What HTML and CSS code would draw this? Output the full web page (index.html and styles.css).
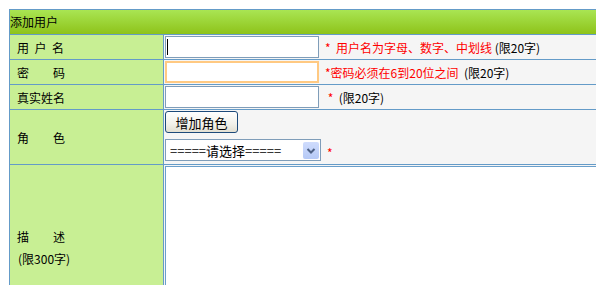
FILE: index.html
```html
<!DOCTYPE html>
<html lang="zh-CN">
<head>
<meta charset="utf-8">
<title>添加用户</title>
<link rel="stylesheet" href="styles.css">
</head>
<body>
<form class="form">
  <div class="head">添加用户</div>

  <div class="label"><span class="spaced">用户名</span></div>
  <div class="field">
    <span class="input-wrap"><input class="text" type="text"><span class="caret"></span></span>
    <span class="hint"><span class="req">*&nbsp; 用户名为字母、数字、中划线</span> (限20字)</span>
  </div>

  <div class="label">密　　码</div>
  <div class="field">
    <input class="text active" type="password">
    <span class="hint"><span class="req">*密码必须在6到20位之间</span>&nbsp;&nbsp;(限20字)</span>
  </div>

  <div class="label">真实姓名</div>
  <div class="field">
    <input class="text" type="text">
    <span class="hint"><span class="req">&nbsp;*</span>&nbsp;&nbsp;(限20字)</span>
  </div>

  <div class="label tall">角　　色</div>
  <div class="field stack">
    <button class="btn" type="button">增加角色</button>
    <div class="select-row">
      <span class="select-wrap">
        <select class="select"><option>=====请选择=====</option></select>
        <span class="arrow"><svg width="16" height="17" viewBox="0 0 16 17"><polyline points="4.5,7 8,10.5 11.5,7" fill="none" stroke="#4d6185" stroke-width="2"/></svg></span>
      </span>
      <span class="req star">*</span>
    </div>
  </div>

  <div class="label desc">
    <div>描　　述</div>
    <div class="limit">(限300字)</div>
  </div>
  <div class="field area">
    <textarea class="textarea"></textarea>
  </div>
</form>
</body>
</html>
```
FILE: styles.css
```css
html {
  overflow: hidden;
}

body {
  margin: 0;
  padding: 9px;
  background: #fff;
  color: #000;
  font: 12px "Noto Sans CJK SC", "Liberation Sans", sans-serif;
}

.form {
  display: grid;
  grid-template-columns: 154px 600px;
  width: max-content;
  border-top: 1px solid #649bc8;
  border-left: 1px solid #649bc8;
}

.head {
  grid-column: 1 / -1;
  box-sizing: border-box;
  height: 25px;
  line-height: 24px;
  border-bottom: 1px solid #649bc8;
  background: linear-gradient(#a9e553, #8ec31a);
}

.label {
  box-sizing: border-box;
  height: 25px;
  padding-left: 7px;
  display: flex;
  align-items: center;
  background: #c8ef94;
  border-right: 1px solid #649bc8;
  border-bottom: 1px solid #649bc8;
}

.label.tall {
  height: 55px;
}

.spaced {
  letter-spacing: 5.5px;
}

.field {
  box-sizing: border-box;
  height: 25px;
  padding-left: 1px;
  display: flex;
  align-items: center;
  background: #f5f5f5;
  border-bottom: 1px solid #649bc8;
}

.input-wrap {
  position: relative;
  display: inline-block;
  height: 22px;
}

.caret {
  position: absolute;
  left: 2px;
  top: 3px;
  width: 1px;
  height: 16px;
  background: #000;
}

.text {
  box-sizing: border-box;
  width: 154px;
  height: 22px;
  margin: 0;
  padding: 0 2px;
  border: 1px solid #7f9db9;
  background: #fff;
  font: 12px "Noto Sans CJK SC", sans-serif;
  outline: none;
  vertical-align: top;
}

.text.active {
  border: 2px solid #ffc982;
}

.hint {
  margin-left: 6px;
  white-space: nowrap;
}

.req {
  color: #ff0000;
}

.stack {
  height: 55px;
  flex-direction: column;
  align-items: flex-start;
  justify-content: flex-start;
  padding-top: 1px;
  gap: 6px;
}

.btn {
  box-sizing: border-box;
  width: 73px;
  height: 22px;
  margin: 0;
  padding: 0;
  border: 1px solid #1d4a7a;
  border-radius: 3px;
  background: linear-gradient(#ffffff, #f2f1ea 60%, #e2dfd2);
  font: 13px "Noto Sans CJK SC", sans-serif;
  color: #000;
}

.select-row {
  display: flex;
  align-items: center;
}

.select-wrap {
  position: relative;
  display: inline-block;
  height: 22px;
}

.select {
  box-sizing: border-box;
  width: 156px;
  height: 22px;
  margin: 0;
  padding: 0 0 0 4px;
  border: 1px solid #7f9db9;
  background: #fff;
  font: 13px "Noto Sans CJK SC", sans-serif;
  color: #000;
  appearance: none;
  -webkit-appearance: none;
  border-radius: 0;
  vertical-align: top;
}

.arrow {
  position: absolute;
  right: 2px;
  top: 3px;
  width: 16px;
  height: 17px;
  border-radius: 2px;
  background: linear-gradient(#cfdcfd, #b5c9f6);
  pointer-events: none;
}

.arrow svg {
  display: block;
}

.star {
  margin-left: 6px;
  padding-top: 4px;
}

.desc {
  height: 166px;
  flex-direction: column;
  align-items: flex-start;
  justify-content: center;
  gap: 5px;
}

.limit {
  padding-left: 1px;
}

.area {
  height: 166px;
  align-items: flex-start;
  padding-top: 1px;
}

.textarea {
  box-sizing: border-box;
  width: 590px;
  height: 163px;
  margin: 0;
  border: 1px solid #6a9fcb;
  background: #fff;
  resize: none;
}
```
